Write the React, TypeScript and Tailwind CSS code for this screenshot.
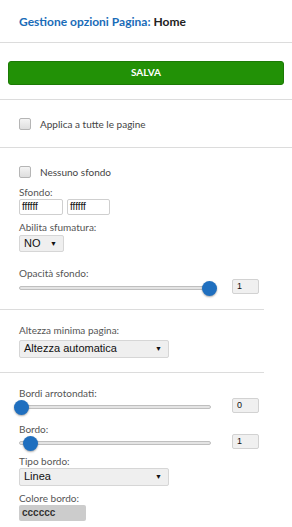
import React from "react";

function Checkbox({ label }: { label: string }) {
  return (
    <div className="flex items-center h-[12px]">
      <span className="w-[12px] h-[12px] rounded-[2px] border border-[#b5b5b5] bg-gradient-to-b from-[#f4f4f4] to-[#dedede] shrink-0" />
      <span className="ml-[9px] text-[10px] leading-[12px] text-[#444]">{label}</span>
    </div>
  );
}

function Label({ text, className = "" }: { text: string; className?: string }) {
  return <div className={`text-[10px] leading-[12px] text-[#555] ${className}`}>{text}</div>;
}

function Select({ value, width, className = "" }: { value: string; width: string; className?: string }) {
  return (
    <div
      className={`flex items-center justify-between ${width} border border-[#d6d6d6] bg-[#efefef] rounded-[2px] pl-[4px] pr-[6px] font-['Liberation_Sans',Arial,sans-serif] text-[11px] text-[#111] ${className}`}
    >
      <span>{value}</span>
      <span className="text-[7px] leading-none">▼</span>
    </div>
  );
}

function Slider({ percent, value }: { percent: number; value: string }) {
  return (
    <div className="flex items-center h-[16px]">
      <div className="relative w-[192px] h-[16px] flex items-center">
        <div className="w-full h-[4px] rounded-full bg-[#e4e4e4] border border-[#bfbfbf]" />
        <div
          className="absolute top-[1px] w-[15px] h-[15px] -ml-[7px] rounded-full bg-[#1f6fbf] shadow-[0_1px_2px_rgba(0,0,0,0.35)]"
          style={{ left: `${2 + percent * 1.88}px` }}
        />
      </div>
      <div className="ml-[21px] -mt-[3px] w-[27px] h-[15px] border border-[#d2d2d2] bg-[#f0f0f0] rounded-[2px] pl-[4px] font-['Liberation_Sans',Arial,sans-serif] text-[9px] leading-[13px] text-[#111]">
        {value}
      </div>
    </div>
  );
}

export default function App() {
  return (
    <div className="w-[292px] min-h-[527px] bg-white font-['Lato','Open_Sans',sans-serif]">
      {/* Header */}
      <div className="h-[43px] pl-[19px] pt-[1px] flex items-center text-[12px] font-bold border-b border-[#dcdcdc]">
        <span className="text-[#1a6cb8]">Gestione opzioni Pagina:</span>
        <span className="ml-[3px] text-[#222]">Home</span>
      </div>

      {/* Salva */}
      <div className="pt-[15px] pb-[14px] px-[8px] border-b border-[#dcdcdc]">
        <button className="w-full h-[24px] rounded-[3px] bg-[#229106] border border-[#1c7a05] text-white text-[10px] font-bold">
          SALVA
        </button>
      </div>

      {/* Applica */}
      <div className="pt-[18px] pb-[17px] pl-[19px] border-b border-[#dcdcdc]">
        <Checkbox label="Applica a tutte le pagine" />
      </div>

      {/* Sfondo */}
      <div className="pt-[18px] pl-[19px]">
        <Checkbox label="Nessuno sfondo" />
        <Label text="Sfondo:" className="mt-[8px]" />
        <div className="mt-[1px] flex gap-[4px]">
          <div className="w-[44px] h-[16px] border border-[#cfcfcf] rounded-[2px] pl-[2px] font-['Liberation_Sans',Arial,sans-serif] text-[10px] leading-[14px] text-[#111]">
            ffffff
          </div>
          <div className="w-[43px] h-[16px] border border-[#cfcfcf] rounded-[2px] pl-[2px] font-['Liberation_Sans',Arial,sans-serif] text-[10px] leading-[14px] text-[#111]">
            ffffff
          </div>
        </div>
        <Label text="Abilita sfumatura:" className="mt-[6px]" />
        <Select value="NO" width="w-[45px]" className="mt-[2px] h-[17px]" />
        <Label text="Opacità sfondo:" className="mt-[15px]" />
        <div className="mt-[1px]">
          <Slider percent={100} value="1" />
        </div>
      </div>
      <div className="mt-[13px] w-[264px] h-px bg-[#dcdcdc]" />

      {/* Altezza */}
      <div className="pl-[19px]">
        <Label text="Altezza minima pagina:" className="mt-[14px]" />
        <Select value="Altezza automatica" width="w-[150px]" className="mt-[4px] h-[18px]" />
      </div>
      <div className="mt-[14px] w-[264px] h-px bg-[#dcdcdc]" />

      {/* Bordi */}
      <div className="pl-[19px] pb-[8px]">
        <Label text="Bordi arrotondati:" className="mt-[14px]" />
        <Slider percent={0} value="0" />
        <Label text="Bordo:" className="mt-[8px]" />
        <Slider percent={5} value="1" />
        <Label text="Tipo bordo:" className="mt-[4px]" />
        <Select value="Linea" width="w-[150px]" className="mt-[1px] h-[18px]" />
        <Label text="Colore bordo:" className="mt-[6px]" />
        <div className="mt-[1px] w-[67px] h-[16px] rounded-[2px] bg-[#cccccc] pl-[3px] font-['Liberation_Sans',Arial,sans-serif] text-[10px] leading-[16px] font-bold text-[#333]">
          cccccc
        </div>
      </div>
    </div>
  );
}
